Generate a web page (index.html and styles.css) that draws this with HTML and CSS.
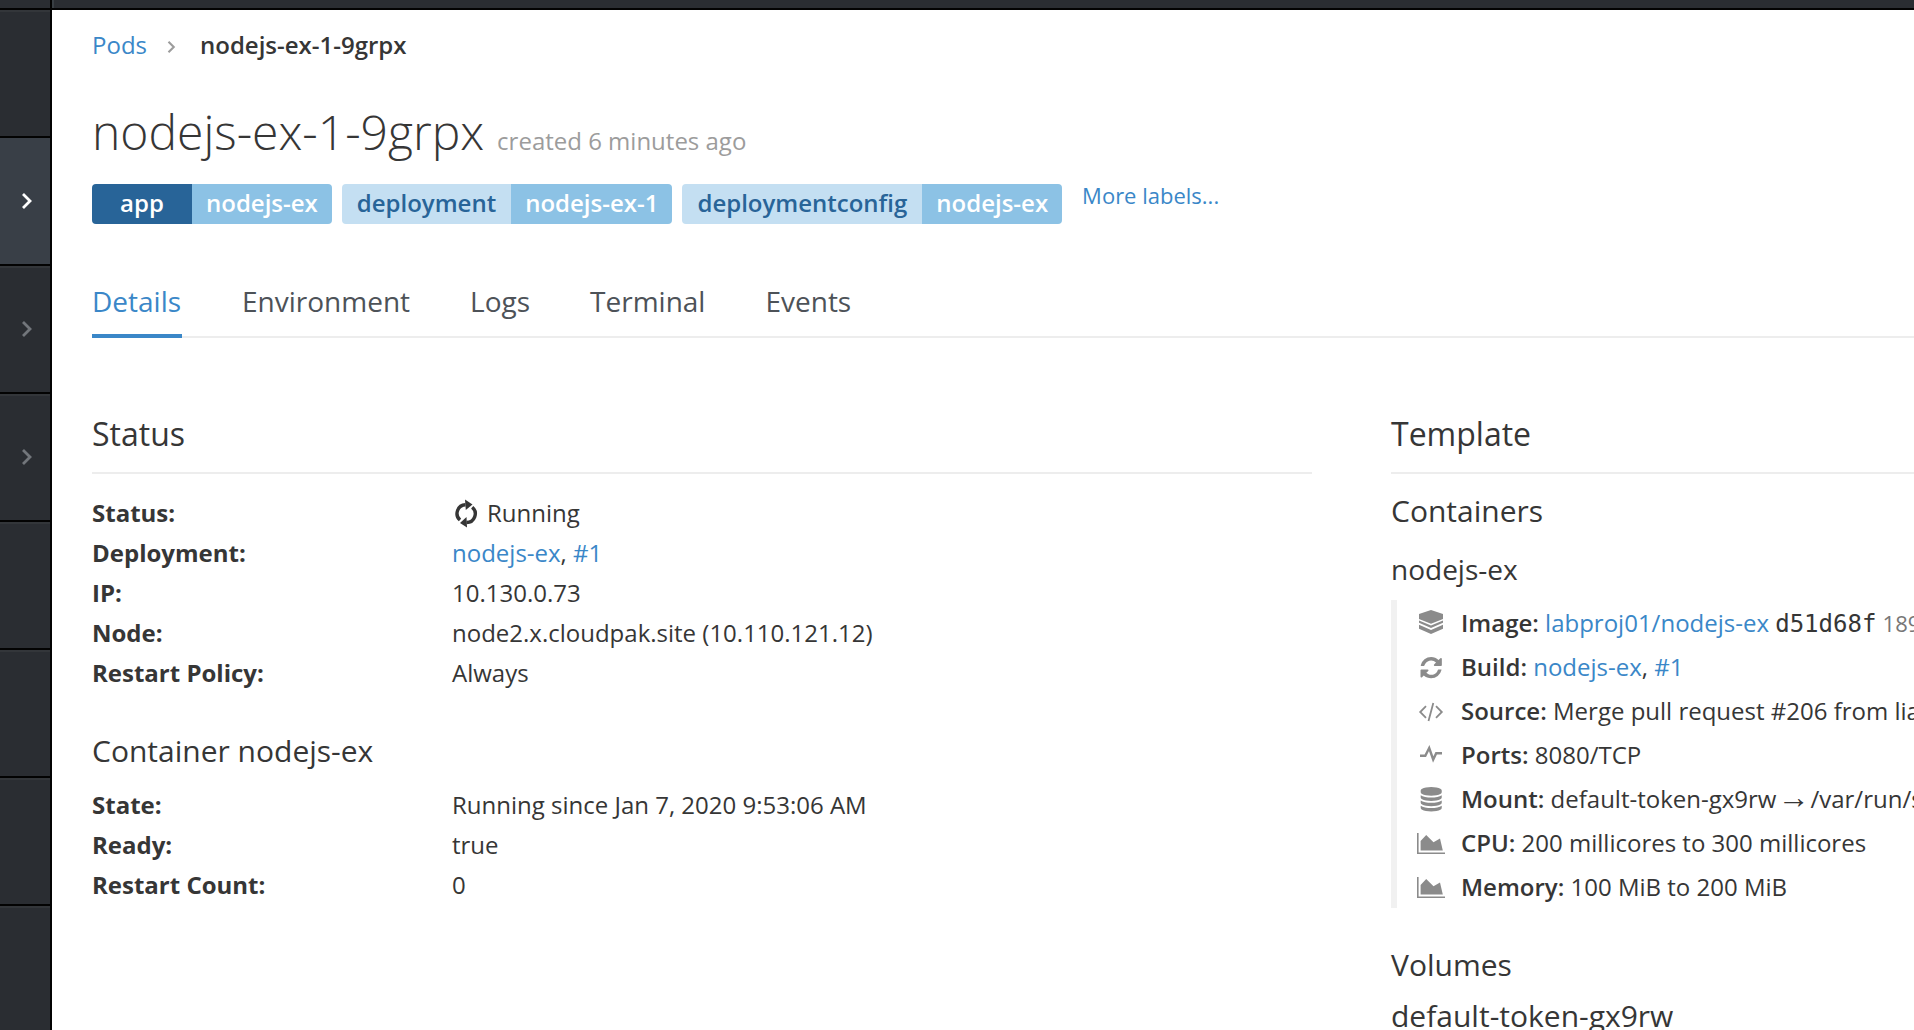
FILE: index.html
```html
<!DOCTYPE html>
<html lang="en">
<head>
<meta charset="utf-8">
<title>nodejs-ex-1-9grpx</title>
<link rel="stylesheet" href="styles.css">
</head>
<body>
<svg class="sprite" aria-hidden="true">
  <symbol id="chevron" viewBox="0 0 12 18"><path d="M2 2l7 7-7 7" fill="none" stroke="currentColor" stroke-width="2.8"/></symbol>
  <symbol id="area" viewBox="0 0 28 28"><path d="M.8 5v20.200H28" fill="none" stroke="currentColor" stroke-width="1.600"/><path d="M3.600 22.500V13L9.200 7l7.300 7.300L23 10.500l2.800 12z" fill="currentColor"/></symbol>
</svg>
<header class="topbar"><span class="topbar-corner"></span></header>
<div class="layout">
  <nav class="sidebar">
    <a class="nav-item nav-first"></a>
    <a class="nav-item nav-active"><svg class="nav-chevron"><use href="#chevron"/></svg></a>
    <a class="nav-item"><svg class="nav-chevron"><use href="#chevron"/></svg></a>
    <a class="nav-item"><svg class="nav-chevron"><use href="#chevron"/></svg></a>
    <a class="nav-item"></a>
    <a class="nav-item"></a>
    <a class="nav-item"></a>
    <a class="nav-item"></a>
  </nav>
  <main class="content">
    <div class="breadcrumb"><a class="link">Pods</a><svg class="crumb-chevron"><use href="#chevron"/></svg><strong class="crumb-current">nodejs-ex-1-9grpx</strong></div>
    <div class="title-row"><h1 class="title">nodejs-ex-1-9grpx</h1><small class="created">created 6 minutes ago</small></div>
    <div class="labels">
      <span class="label"><span class="label-key label-key-app">app</span><span class="label-value">nodejs-ex</span></span>
      <span class="label"><span class="label-key">deployment</span><span class="label-value">nodejs-ex-1</span></span>
      <span class="label"><span class="label-key">deploymentconfig</span><span class="label-value">nodejs-ex</span></span>
      <a class="link more-labels">More labels...</a>
    </div>
    <div class="tabs">
      <a class="tab tab-active">Details</a><a class="tab">Environment</a><a class="tab">Logs</a><a class="tab">Terminal</a><a class="tab">Events</a>
    </div>
    <div class="columns">
      <section class="column">
        <h2 class="section-title">Status</h2>
        <dl class="facts">
          <dt>Status:</dt>
          <dd><svg class="running-icon" viewBox="0 0 24 32" fill="none" stroke="currentColor" stroke-width="3.400"><path d="M6 22A8.700 8.700 0 0 1 11.500 6.800"/><path d="M18.200 9.200A8.700 8.700 0 0 1 12.500 24.500"/><path d="M11 1.500l7.500 5-6.700 5.500z" fill="currentColor" stroke="none"/><path d="M13 29.500L6 25l6.500-6z" fill="currentColor" stroke="none"/></svg>Running</dd>
          <dt>Deployment:</dt><dd><a class="link">nodejs-ex</a>, <a class="link">#1</a></dd>
          <dt>IP:</dt><dd>10.130.0.73</dd>
          <dt>Node:</dt><dd>node2.x.cloudpak.site (10.110.121.12)</dd>
          <dt>Restart Policy:</dt><dd>Always</dd>
        </dl>
        <h3 class="subsection-title container-title">Container nodejs-ex</h3>
        <dl class="facts container-facts">
          <dt>State:</dt><dd>Running since Jan 7, 2020 9:53:06 AM</dd>
          <dt>Ready:</dt><dd>true</dd>
          <dt>Restart Count:</dt><dd>0</dd>
        </dl>
      </section>
      <section class="column">
        <h2 class="section-title">Template</h2>
        <h3 class="subsection-title containers-title">Containers</h3>
        <h4 class="pod-name">nodejs-ex</h4>
        <ul class="template">
          <li><svg class="icon" viewBox="0 0 28 28" fill="currentColor"><path d="M14 2l12 4v5l-12 4.800L2 11V6z"/><path d="M2 12.500l12 5 12-5v2.300l-12 5.300-12-5.300z"/><path d="M2 16.800l12 5.200 12-5.200v4L14 26 2 20.800z"/></svg><b>Image: </b><a class="link">labproj01/nodejs-ex</a> <code class="hash">d51d68f</code> <small class="size">189</small></li>
          <li><svg class="icon" viewBox="0 0 28 28" fill="currentColor"><path transform="translate(3.500 5) scale(.0139)" d="M1511 928q0 5-1 7-64 268-268 434.500t-478 166.500q-146 0-282.500-55t-243.500-157l-129 129q-19 19-45 19t-45-19-19-45v-448q0-26 19-45t45-19h448q26 0 45 19t19 45-19 45l-137 137q71 66 161 102t187 36q134 0 250-65t186-179q11-17 53-117 8-23 30-23h192q13 0 22.500 9.500t9.500 22.500zm25-800v448q0 26-19 45t-45 19h-448q-26 0-45-19t-19-45 19-45l138-138q-148-137-349-137-134 0-250 65t-186 179q-11 17-53 117-8 23-30 23h-199q-13 0-22.500-9.500t-9.500-22.500v-7q65-268 270-434.500t480-166.500q146 0 284 55.500t245 156.500l130-129q19-19 45-19t45 19 19 45z"/></svg><b>Build: </b><a class="link">nodejs-ex</a>, <a class="link">#1</a></li>
          <li><svg class="icon" viewBox="0 0 28 28" fill="none" stroke="currentColor" stroke-width="1.800"><path d="M9 10.200L3.200 16 9 21.800M19 10.200l5.800 5.800-5.800 5.800M16.300 7l-4.800 18"/></svg><b>Source: </b>Merge pull request #206 from lia</li>
          <li><svg class="icon" viewBox="0 0 28 28" fill="none" stroke="currentColor" stroke-width="2.400"><path d="M3 15.700h5.300L12.200 8l4 11.500 3-6.300H25"/></svg><b>Ports: </b>8080/TCP</li>
          <li><svg class="icon" viewBox="0 0 28 28" fill="currentColor"><path transform="translate(3.700 8.300) scale(.0137)" d="M768 384q237 0 443-43t325-127v170q0 69-103 128t-280 93.500-385 34.500-385-34.500-280-93.500-103-128v-170q119 84 325 127t443 43zm0 768q237 0 443-43t325-127v170q0 69-103 128t-280 93.500-385 34.500-385-34.500-280-93.500-103-128v-170q119 84 325 127t443 43zm0-384q237 0 443-43t325-127v170q0 69-103 128t-280 93.500-385 34.500-385-34.500-280-93.500-103-128v-170q119 84 325 127t443 43zm0-1152q208 0 385 34.500t280 93.500 103 128v128q0 69-103 128t-280 93.500-385 34.500-385-34.500-280-93.500-103-128v-128q0-69 103-128t280-93.500 385-34.500z"/></svg><b>Mount: </b>default-token-gx9rw<span class="arrow">→</span>/var/run/s</li>
          <li><svg class="icon"><use href="#area"/></svg><b>CPU: </b>200 millicores to 300 millicores</li>
          <li><svg class="icon"><use href="#area"/></svg><b>Memory: </b>100 MiB to 200 MiB</li>
        </ul>
        <h3 class="subsection-title volumes-title">Volumes</h3>
        <h4 class="pod-name volume-name">default-token-gx9rw</h4>
      </section>
    </div>
  </main>
</div>
</body>
</html>
```

FILE: styles.css
```css
* { box-sizing: border-box; }
body {
  margin: 0;
  height: 1030px;
  overflow: hidden;
  display: flex;
  flex-direction: column;
  background: #fff;
  color: #363636;
  font: 24px/40px "Open Sans", sans-serif;
}
h1, h2, h3, h4, dl, dd, ul { margin: 0; padding: 0; font-weight: 400; }
.sprite { position: absolute; width: 0; height: 0; }
.link { color: #3a87c8; }
.topbar { flex: none; height: 10px; background: #2a2d32; border-bottom: 2px solid #030303; }
.topbar-corner { display: block; width: 54px; height: 8px; border-right: 2px solid #393f44; box-shadow: inset -2px 0 #030303; }
.layout { flex: 1; min-height: 0; display: flex; }

.sidebar {
  flex: none;
  width: 52px;
  overflow: hidden;
  background: #2a2d32;
  border-right: 2px solid #030303;
}
.nav-item {
  display: flex;
  align-items: center;
  height: 128px;
  padding-left: 21px;
  border-top: 2px solid #030303;
  box-shadow: inset 0 2px #33363a;
  color: #72767b;
}
.nav-first { height: 126px; border-top: 0; }
.nav-active { background: #393f47; box-shadow: none; color: #fff; }
.nav-chevron { width: 12px; height: 18px; }

.content { flex: 1; min-width: 0; overflow: hidden; padding: 15px 0 0 40px; }
.breadcrumb { display: flex; align-items: center; height: 40px; }
.crumb-chevron { width: 9px; height: 14px; margin: 3px 24px 0 20px; color: #9c9c9c; }
.crumb-current { font-weight: 600; }
.title-row { display: flex; align-items: baseline; gap: 13px; height: 56px; margin-top: 38px; }
.title { font-size: 48px; line-height: 58px; font-weight: 300; }
.created { font-size: 24px; color: #9c9c9c; }
.labels { display: flex; gap: 10px; height: 40px; margin-top: 25px; }
.label { display: flex; border-radius: 4px; overflow: hidden; font-weight: 600; line-height: 38px; }
.label-key { padding: 0 15px; background: #c4dff2; color: #286498; }
.label-key-app { width: 100px; text-align: center; background: #286498; color: #fff; }
.label-value { padding: 0 14px; background: #8cc2e5; color: #fff; }
.more-labels { margin-left: 10px; font-size: 22px; line-height: 22px; }
.tabs { display: flex; gap: 60px; height: 54px; margin-top: 60px; border-bottom: 2px solid #ededed; }
.tab { height: 54px; font-size: 28px; line-height: 34px; color: #4d5258; }
.tab-active { width: 90px; color: #3a87c8; border-bottom: 4px solid #3a87c8; }

.columns { display: grid; grid-template-columns: 1220px 1220px; column-gap: 79px; margin-top: 78px; }
.section-title { height: 58px; font-size: 32px; line-height: 36px; border-bottom: 2px solid #ededed; }
.facts { display: grid; grid-template-columns: 360px 1fr; margin-top: 19px; }
.facts dt { font-weight: 700; }
.facts dd { display: flex; white-space: pre; }
.running-icon { width: 24px; height: 32px; margin: 5px 9px 0 2px; }
.subsection-title { font-size: 30px; line-height: 34px; }
.container-title { margin-top: 41px; }
.container-facts { margin-top: 17px; }
.containers-title { margin-top: 20px; }
.pod-name { margin-top: 25px; font-size: 28px; line-height: 32px; }
.template {
  margin-top: 15px;
  padding: 0 0 0 20px;
  list-style: none;
  border-left: 6px solid #f1f1f1;
}
.template li { height: 44px; line-height: 46px; white-space: pre; }
.template b { font-weight: 600; }
.icon { width: 28px; height: 28px; margin: 8px 16px 0 0; vertical-align: top; color: #8b8b8b; }
.hash { font-family: "DejaVu Sans Mono", monospace; font-size: 24px; line-height: 1; }
.size { font-size: 22px; line-height: 1; color: #777; }
.arrow { display: inline-block; width: 34px; text-align: center; line-height: 1; font-family: "Liberation Sans", sans-serif; font-size: 32px; }
.volumes-title { margin-top: 40px; }
.volume-name { margin-top: 18px; font-size: 30px; }
```
